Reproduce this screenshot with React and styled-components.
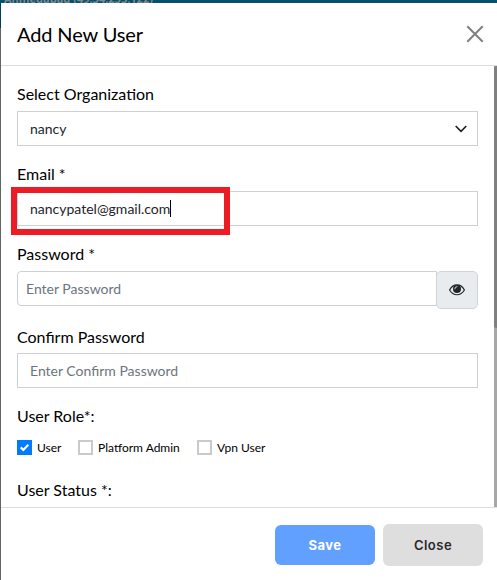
import React from "react";
import styled, { createGlobalStyle } from "styled-components";

const GlobalStyle = createGlobalStyle`
  * { box-sizing: border-box; }
  body { margin: 0; overflow: hidden; background: #fff; }
  button, input { font: inherit; }
`;

const Page = styled.div`
  width: 497px;
  height: 580px;
  display: flex;
  flex-direction: column;
  font-family: Lato, sans-serif;
  color: #000;
  overflow: hidden;
`;

const Backdrop = styled.div`
  flex: none;
  height: 3px;
  overflow: hidden;
  background: #03506f;
  color: #80888c;
  padding-left: 4px;
  font: bold 11px/14px "Open Sans", sans-serif;
  white-space: nowrap;
`;

const BackdropText = styled.div`
  margin-top: -8px;
`;

const Frame = styled.div`
  flex: 1;
  min-height: 0;
  display: flex;
  background: linear-gradient(#003f59 25px, #636466 25px);
  padding-left: 1px;
`;

const Dialog = styled.section`
  flex: 1;
  display: flex;
  flex-direction: column;
  background: #fff;
`;

const Header = styled.header`
  flex: none;
  height: 63px;
  padding: 0 13px 0 16px;
  display: flex;
  align-items: center;
  justify-content: space-between;
  border-bottom: 1px solid #dedede;
`;

const Title = styled.h1`
  margin: 0;
  font-size: 20px;
  line-height: 24px;
  font-weight: 400;
  letter-spacing: -0.12px;
`;

const IconButton = styled.button`
  display: flex;
  padding: 0;
  border: 0;
  background: none;
`;

const Body = styled.div`
  flex: none;
  height: 441px;
  display: flex;
`;

const Form = styled.form`
  flex: 1;
  padding: 18px 16px 0;
  overflow: hidden;
`;

const Track = styled.div`
  width: 3px;
  background: #a7a7a7;
`;

const Thumb = styled.div`
  height: 262px;
  background: #808080;
  border-radius: 2px 0 0 2px;
`;

const Field = styled.div`
  height: ${(p) => p.$height || 80}px;
`;

const Label = styled.div`
  height: ${(p) => (p.$tight ? 26 : 27)}px;
  font-size: 16px;
  line-height: 20px;
`;

const Control = styled.div`
  position: relative;
  height: 35px;
  padding: 0 ${(p) => (p.$grouped ? 8 : 12)}px;
  flex: 1;
  display: flex;
  align-items: center;
  border: 1px solid #ced0d6;
  border-radius: ${(p) => (p.$grouped ? "4px 0 0 4px" : "0")};
  font-size: 14px;
  line-height: 20px;
  color: ${(p) => (p.$placeholder ? "#6c757d" : "#212529")};
`;

const SelectControl = styled(Control)`
  padding-right: 10px;
`;

const Value = styled.span`
  flex: 1;
`;

const Caret = styled.span`
  width: 1px;
  height: 17px;
  background: #000;
`;

const Highlight = styled.div`
  position: absolute;
  left: -7px;
  top: -5px;
  width: 219px;
  height: 48px;
  border: 6px solid #ed1c24;
`;

const InputGroup = styled.div`
  display: flex;
  align-items: flex-start;
`;

const Reveal = styled.button`
  position: relative;
  width: 42px;
  height: 38px;
  margin-left: -1px;
  padding: 0;
  display: flex;
  align-items: center;
  justify-content: center;
  border: 1px solid #ced4da;
  border-radius: 5px;
  background: #e9ecef;
`;

const Roles = styled.div`
  margin-top: 7px;
  display: flex;
  align-items: center;
`;

const Role = styled.label`
  width: ${(p) => p.$width}px;
  display: flex;
  align-items: center;
  gap: 5px;
  font-size: 12px;
  line-height: 15px;
  white-space: nowrap;
`;

const Box = styled.span`
  width: 15px;
  height: 15px;
  flex: none;
  display: flex;
  border: ${(p) => (p.$checked ? "0" : "2px solid #cacaca")};
  background: ${(p) => (p.$checked ? "#007bff" : "#fff")};
`;

const Footer = styled.footer`
  flex: 1;
  display: flex;
  align-items: center;
  justify-content: flex-end;
  gap: 8px;
  padding: 1px 14px 0 0;
  border-top: 1px solid #dedede;
`;

const ActionButton = styled.button`
  width: 100px;
  height: ${(p) => (p.$primary ? 40 : 42)}px;
  padding: 0;
  border: 0;
  border-radius: 6px;
  background: ${(p) => (p.$primary ? "#61a0ff" : "#dedede")};
  color: ${(p) => (p.$primary ? "#fff" : "#292929")};
  font-family: Inter, sans-serif;
  font-size: 13px;
  font-weight: ${(p) => (p.$primary ? 700 : 600)};
  letter-spacing: 0.5px;
`;

const CloseIcon = () => (
  <svg width="18" height="18" viewBox="0 0 18 18">
    <path d="M1.3 1.3 16.7 16.7M16.7 1.3 1.3 16.7" stroke="#808080" strokeWidth="2" />
  </svg>
);

const Chevron = () => (
  <svg width="12" height="8" viewBox="0 0 12 8">
    <path d="M.7 1 6 6.3 11.3 1" fill="none" stroke="#1c1c1c" strokeWidth="1.6" />
  </svg>
);

const Eye = () => (
  <svg width="16" height="12" viewBox="0 0 16 12">
    <path d="M.6 6C4.2-.9 11.8-.9 15.4 6 11.8 12.3 4.2 12.3 .6 6Z" fill="none" stroke="#212529" strokeWidth="1.2" />
    <circle cx="8" cy="5" r="4" fill="#212529" />
    <path d="M5.8 4.8A2.2 2.2 0 0 1 8 2.6" fill="none" stroke="#e9ecef" strokeWidth=".9" strokeLinecap="round" />
  </svg>
);

const Tick = () => (
  <svg width="15" height="15" viewBox="0 0 15 15">
    <path d="m3.7 7.4 2.6 2.5 5-5.1" fill="none" stroke="#fff" strokeWidth="2.2" />
  </svg>
);

const roles = [
  { name: "User", checked: true, width: 61 },
  { name: "Platform Admin", width: 119 },
  { name: "Vpn User", width: 80 },
];

export default function App() {
  return (
    <>
      <GlobalStyle />
      <Page>
        <Backdrop><BackdropText>Ahmedabad (49.34.253.122)</BackdropText></Backdrop>
        <Frame>
          <Dialog>
            <Header>
              <Title>Add New User</Title>
              <IconButton aria-label="Close dialog"><CloseIcon /></IconButton>
            </Header>
            <Body>
              <Form>
                <Field>
                  <Label>Select Organization</Label>
                  <SelectControl><Value>nancy</Value><Chevron /></SelectControl>
                </Field>
                <Field>
                  <Label>Email *</Label>
                  <Control>nancypatel@gmail.com<Caret /><Highlight /></Control>
                </Field>
                <Field $height={83}>
                  <Label>Password *</Label>
                  <InputGroup>
                    <Control $grouped $placeholder>Enter Password</Control>
                    <Reveal type="button" aria-label="Show password"><Eye /></Reveal>
                  </InputGroup>
                </Field>
                <Field $height={79}>
                  <Label $tight>Confirm Password</Label>
                  <Control $placeholder>Enter Confirm Password</Control>
                </Field>
                <Field $height={74}>
                  <Label>User Role*:</Label>
                  <Roles>
                    {roles.map((role) => (
                      <Role key={role.name} $width={role.width}>
                        <Box $checked={role.checked}>{role.checked && <Tick />}</Box>
                        {role.name}
                      </Role>
                    ))}
                  </Roles>
                </Field>
                <Label>User Status *:</Label>
              </Form>
              <Track><Thumb /></Track>
            </Body>
            <Footer>
              <ActionButton $primary>Save</ActionButton>
              <ActionButton>Close</ActionButton>
            </Footer>
          </Dialog>
        </Frame>
      </Page>
    </>
  );
}
